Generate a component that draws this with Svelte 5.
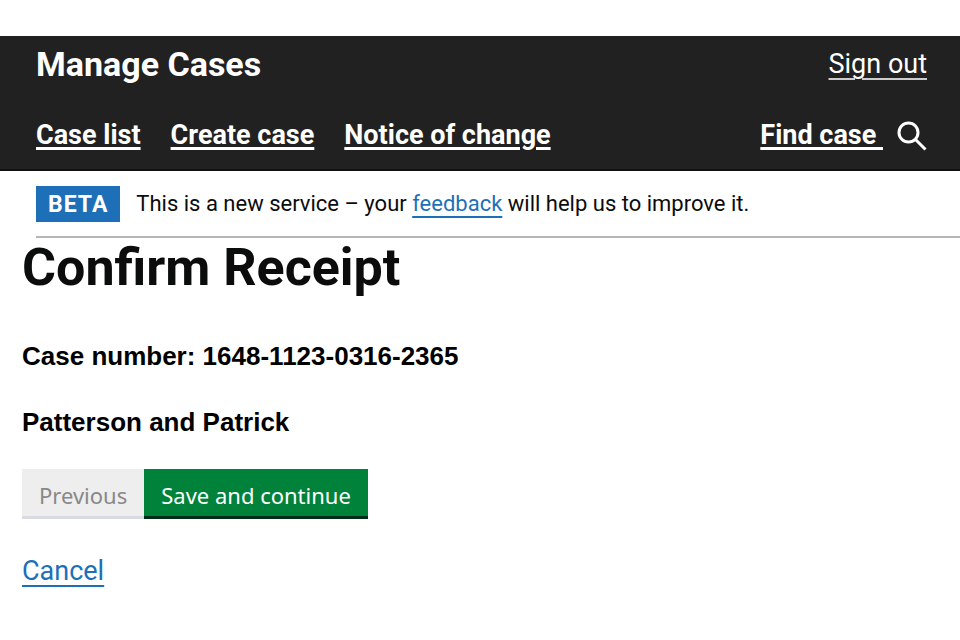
<script lang="ts">
  const navItems = [
    { label: 'Case list', href: '#case-list' },
    { label: 'Create case', href: '#create-case' },
    { label: 'Notice of change', href: '#notice-of-change' },
  ];

  const caseNumber = '1648-1123-0316-2365';
  const parties = 'Patterson and Patrick';
</script>

<header class="header">
  <div class="header-row">
    <span class="service-name">Manage Cases</span>
    <a class="sign-out" href="#sign-out">Sign out</a>
  </div>

  <nav class="header-row" aria-label="Primary navigation">
    <ul class="nav-list">
      {#each navItems as item}
        <li><a class="nav-link" href={item.href}>{item.label}</a></li>
      {/each}
    </ul>
    <div class="find">
      <a class="nav-link" href="#find-case">Find case&nbsp;</a>
      <svg class="search-icon" viewBox="0 0 30 30" aria-hidden="true">
        <circle cx="11.5" cy="11.5" r="9.5" />
        <path d="M18 18l10.5 10.5" />
      </svg>
    </div>
  </nav>
</header>

<div class="phase-banner">
  <strong class="tag">BETA</strong>
  <span class="phase-text">
    This is a new service – your <a class="link" href="#feedback">feedback</a> will help us to improve it.
  </span>
</div>

<main class="main">
  <h1>Confirm Receipt</h1>
  <h2>Case number: {caseNumber}</h2>
  <h2>{parties}</h2>

  <form class="actions" onsubmit={(e) => e.preventDefault()}>
    <button class="button secondary" type="button" disabled>Previous</button>
    <button class="button" type="submit">Save and continue</button>
  </form>

  <a class="link cancel" href="#cancel">Cancel</a>
</main>

<style>
  :global(body) {
    font-family: Roboto, 'Liberation Sans', sans-serif;
    color: #0b0c0c;
    background: #fff;
  }

  a {
    text-underline-offset: 5px;
    text-decoration-thickness: 2px;
  }

  .header {
    margin-top: 36px;
    padding: 11px 33px 18px 36px;
    background: #212121;
    border-bottom: 2px solid #111;
    color: #fff;
  }

  .header-row {
    display: flex;
    align-items: center;
    justify-content: space-between;

    + .header-row {
      margin-top: 38px;
    }
  }

  .service-name {
    font-size: 34px;
    font-weight: bold;
    line-height: 34px;
  }

  .sign-out {
    color: #fff;
    font-size: 27px;
    line-height: 34px;
    text-decoration-color: #ccc;
  }

  .nav-list {
    display: flex;
    gap: 30px;
    margin: 0;
    padding: 0;
    list-style: none;
  }

  .nav-link {
    color: #fff;
    font-size: 27px;
    font-weight: bold;
    line-height: 32px;
    text-decoration-thickness: 3px;
    text-underline-offset: 3px;
  }

  .find {
    display: flex;
    align-items: flex-end;
    gap: 14px;
  }

  .search-icon {
    width: 30px;
    height: 30px;
    fill: none;
    stroke: #fff;
    stroke-width: 3;
  }

  .phase-banner {
    display: flex;
    align-items: center;
    gap: 16px;
    margin-left: 36px;
    padding: 15px 0 14px;
    border-bottom: 2px solid #b5b6b8;
  }

  .tag {
    padding: 3px 12px 1px;
    background: #1d70b8;
    color: #fff;
    font-size: 23px;
    line-height: 32px;
    letter-spacing: 1px;
  }

  .phase-text {
    font-size: 22px;
    line-height: 32px;
  }

  .link {
    color: #1d70b8;
  }

  .main {
    padding: 0 22px;
  }

  h1 {
    margin: 0 0 43px;
    font-size: 52px;
    line-height: 60px;
  }

  h2 {
    margin: 0;
    color: #000;
    font-family: 'Liberation Sans', Arial, sans-serif;
    font-size: 26px;
    line-height: 30px;

    + h2 {
      margin-top: 36px;
    }
  }

  .actions {
    display: flex;
    margin-top: 32px;
  }

  .button {
    padding: 11px 17px 6px;
    border: 0;
    border-bottom: 3px solid #002d18;
    background: #00823b;
    color: #fff;
    font-family: 'Noto Sans', sans-serif;
    font-size: 22px;
    line-height: 30px;
    cursor: pointer;
  }

  .secondary {
    border-bottom-color: #d8dbe0;
    background: #eee;
    color: #888;
    cursor: default;
  }

  .cancel {
    display: inline-block;
    margin-top: 36px;
    font-size: 27px;
    line-height: 32px;
  }
</style>
